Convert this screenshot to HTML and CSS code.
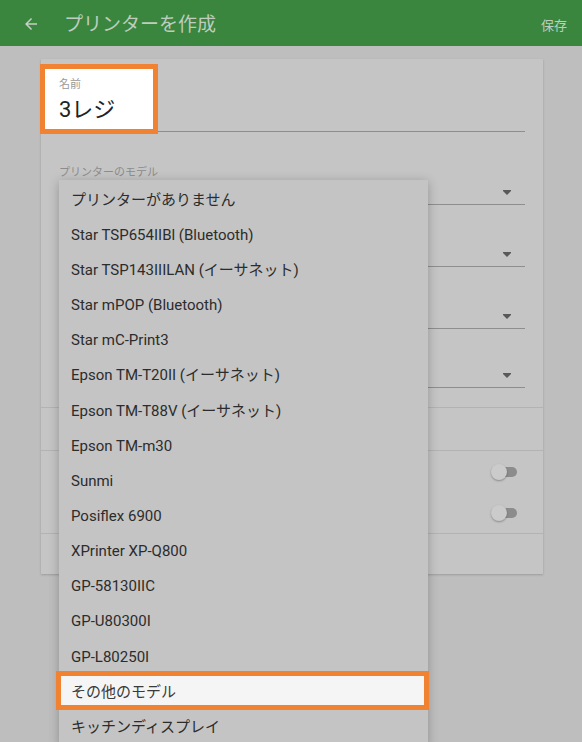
FILE: index.html
```html
<!DOCTYPE html>
<html lang="ja">
<head>
<meta charset="utf-8">
<title>プリンターを作成</title>
<link rel="stylesheet" href="styles.css">
</head>
<body>
<header class="appbar">
  <svg class="back" viewBox="4 4 16 16" width="12" height="12" aria-hidden="true"><path d="M20 11H7.83l5.59-5.59L12 4l-8 8 8 8 1.41-1.41L7.83 13H20v-2z"/></svg>
  <h1 class="title">プリンターを作成</h1>
  <span class="save">保存</span>
</header>
<main class="page">
  <section class="card">
    <div class="fields">
      <div class="field name-field">
        <div class="label">名前</div>
        <div class="value">3レジ</div>
      </div>
      <div class="field model">
        <div class="label">プリンターのモデル</div>
        <div class="select"><svg class="caret" viewBox="0 0 8 5" width="8" height="5"><path d="M0 0h8v1L4 5 0 1z"/></svg></div>
      </div>
      <div class="field sel">
        <div class="label"></div>
        <div class="select"><svg class="caret" viewBox="0 0 8 5" width="8" height="5"><path d="M0 0h8v1L4 5 0 1z"/></svg></div>
      </div>
      <div class="field sel">
        <div class="label"></div>
        <div class="select"><svg class="caret" viewBox="0 0 8 5" width="8" height="5"><path d="M0 0h8v1L4 5 0 1z"/></svg></div>
      </div>
      <div class="field sel last">
        <div class="label"></div>
        <div class="select"><svg class="caret" viewBox="0 0 8 5" width="8" height="5"><path d="M0 0h8v1L4 5 0 1z"/></svg></div>
      </div>
    </div>
    <div class="row row-a"></div>
    <div class="row toggles">
      <div class="toggle-line"><span class="switch"><span class="track"></span><span class="thumb"></span></span></div>
      <div class="toggle-line"><span class="switch"><span class="track"></span><span class="thumb"></span></span></div>
    </div>
    <div class="row row-c"></div>
  </section>
  <ul class="menu">
    <li class="item">プリンターがありません</li>
    <li class="item">Star TSP654IIBl (Bluetooth)</li>
    <li class="item">Star TSP143IIILAN (イーサネット)</li>
    <li class="item">Star mPOP (Bluetooth)</li>
    <li class="item">Star mC-Print3</li>
    <li class="item">Epson TM-T20II (イーサネット)</li>
    <li class="item">Epson TM-T88V (イーサネット)</li>
    <li class="item">Epson TM-m30</li>
    <li class="item">Sunmi</li>
    <li class="item">Posiflex 6900</li>
    <li class="item">XPrinter XP-Q800</li>
    <li class="item">GP-58130IIC</li>
    <li class="item">GP-U80300I</li>
    <li class="item">GP-L80250I</li>
    <li class="item picked">その他のモデル</li>
    <li class="item">キッチンディスプレイ</li>
  </ul>
</main>
</body>
</html>
```
FILE: styles.css
```css
html, body {
  margin: 0;
  padding: 0;
}
body {
  width: 582px;
  height: 742px;
  overflow: hidden;
  background: #bebebe;
  font-family: Roboto, "Noto Sans CJK JP", sans-serif;
  color: #262626;
}
.appbar {
  height: 46px;
  background: #3a863e;
  display: flex;
  align-items: center;
  padding: 2px 15px 0 25px;
  box-sizing: border-box;
}
.back {
  fill: #c3d0c3;
  flex: none;
}
.title {
  margin: 2px 0 0 27px;
  font-size: 19px;
  font-weight: 400;
  color: #bfcdbf;
  flex: 1;
  line-height: 24px;
}
.save {
  font-size: 13px;
  color: #bfcdbf;
}
.card {
  margin: 13px 0 0 41px;
  width: 502px;
  background: #c5c5c5;
  box-shadow: 0 1px 2px rgba(0,0,0,0.18);
}
.fields {
  padding: 0 18px 19px;
}
.field {
  position: relative;
}
.label {
  font-size: 11px;
  line-height: 14px;
  height: 14px;
  color: #8c8c8c;
}
.name-field {
  isolation: isolate;
  padding-top: 19px;
  padding-bottom: 7px;
  border-bottom: 1px solid #8e8e8e;
}
.name-field::before {
  content: "";
  position: absolute;
  left: -19px;
  top: 5px;
  width: 118px;
  height: 70px;
  box-sizing: border-box;
  border: 5px solid #f08232;
  background: #ffffff;
  z-index: -1;
}
.name-field .label {
  color: #9a9a9a;
}
.value {
  margin-top: 4px;
  font-size: 22px;
  line-height: 28px;
  color: #222222;
}
.model {
  margin-top: 34px;
}
.sel {
  margin-top: 23px;
}
.sel.last {
  margin-top: 20px;
}
.select {
  height: 24px;
  border-bottom: 1px solid #8e8e8e;
  display: flex;
  align-items: center;
  justify-content: flex-end;
  padding-right: 14px;
}
.caret {
  fill: #595959;
}
.row {
  border-top: 1px solid #b3b3b3;
}
.row-a {
  height: 42px;
}
.row-c {
  height: 40px;
}
.toggle-line {
  height: 41px;
  display: flex;
  align-items: center;
  justify-content: flex-end;
  padding-right: 26px;
}
.switch {
  position: relative;
  width: 26px;
  height: 16px;
}
.track {
  position: absolute;
  left: 2px;
  right: 0;
  top: 3px;
  height: 10px;
  border-radius: 5px;
  background: #8c8c8c;
}
.thumb {
  position: absolute;
  left: 0;
  top: 0;
  width: 16px;
  height: 16px;
  border-radius: 50%;
  background: #cbcbcb;
  box-shadow: 0 1px 2px rgba(0,0,0,0.3);
}
.menu {
  position: absolute;
  left: 59px;
  top: 180px;
  width: 369px;
  margin: 0;
  padding: 2px 0 0;
  list-style: none;
  background: #c4c4c4;
  box-shadow: 0 2px 10px rgba(0,0,0,0.25);
}
.item {
  height: 35.17px;
  line-height: 20px;
  display: flex;
  align-items: center;
  padding-left: 12px;
  font-size: 15px;
  color: #2c2c2c;
  white-space: nowrap;
}
.item.picked {
  position: relative;
  isolation: isolate;
  color: #3a3a3a;
}
.item.picked::before {
  content: "";
  position: absolute;
  left: -3px;
  right: -1px;
  top: -3px;
  bottom: -1px;
  border: 5px solid #f08232;
  background: #f5f5f5;
  z-index: -1;
}
```
